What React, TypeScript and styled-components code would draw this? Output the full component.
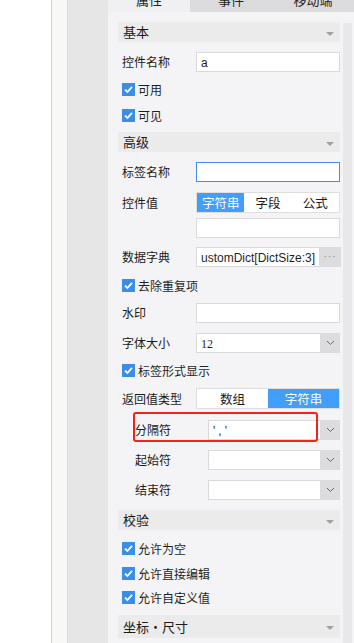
import React from "react";
import styled, { createGlobalStyle } from "styled-components";

const Global = createGlobalStyle`
  html, body { margin: 0; padding: 0; background: #ffffff; }
  body { font-family: "Noto Sans CJK SC", "Noto Sans", sans-serif; color: #1f1f1f; }
  * { box-sizing: border-box; }
`;

const Page = styled.div`
  display: flex;
  width: 354px;
  height: 643px;
  overflow: hidden;
`;

const WhiteArea = styled.div`
  width: 52px;
  background: #ffffff;
  border-right: 1px solid #d7d4c7;
`;

const Strip = styled.div`
  width: 16px;
  background: #f8f8f6;
  border-right: 1px solid #dcdcdc;
`;

const Gutter = styled.div`
  width: 40px;
  background: #e6e6e6;
`;

const Panel = styled.div`
  width: 246px;
  display: flex;
  flex-direction: column;
  background: #f4f4f6;
`;

const Tabs = styled.div`
  display: flex;
  height: 12px;
  overflow: hidden;
`;

const Tab = styled.div<{ $active?: boolean }>`
  width: 82px;
  height: 12px;
  background: ${(p) => (p.$active ? "#f0f0f2" : "#dcdcdf")};
  display: flex;
  justify-content: center;
  font-size: 13px;
  color: #222;
`;

const TabText = styled.span`
  display: block;
  height: 24px;
  line-height: 24px;
  margin-top: -12px;
`;

const Body = styled.div`
  flex: 1;
  display: flex;
`;

const Content = styled.div`
  width: 222px;
  margin-left: 10px;
  margin-right: 3px;
  padding-top: 10px;
  display: flex;
  flex-direction: column;
`;

const Scrollbar = styled.div`
  width: 9px;
  margin-top: 11px;
  background: #e8e8ea;
`;

const Header = styled.div<{ $mt?: number; $h?: number }>`
  margin-top: ${(p) => p.$mt ?? 0}px;
  height: ${(p) => p.$h ?? 20}px;
  background: #ebebeb;
  display: flex;
  align-items: center;
  justify-content: space-between;
  padding: 0 6px 0 5px;
  font-size: 13px;
  line-height: 20px;
  color: #1a1a1a;
`;

const Caret = styled.span`
  width: 0;
  height: 0;
  border-left: 4px solid transparent;
  border-right: 4px solid transparent;
  border-top: 4px solid #a0a0a0;
  margin-top: 3px;
`;

const Row = styled.div<{ $mt: number; $h?: number; $indent?: number }>`
  position: relative;
  margin-top: ${(p) => p.$mt}px;
  height: ${(p) => p.$h ?? 20}px;
  display: flex;
  align-items: center;
  padding-left: ${(p) => p.$indent ?? 4}px;
  font-size: 12px;
`;

const Label = styled.span<{ $w: number }>`
  width: ${(p) => p.$w}px;
  flex: none;
  line-height: 20px;
  color: #1a1a1a;
`;

const Input = styled.div<{ $focus?: boolean }>`
  flex: 1;
  height: 20px;
  background: #ffffff;
  border: 1px solid ${(p) => (p.$focus ? "#3d8ef0" : "#d9d9d9")};
  padding: 0 4px;
  font-size: 12px;
  line-height: 18px;
  overflow: hidden;
  white-space: nowrap;
`;

const LatinText = styled.span<{ $spacing?: number }>`
  font-family: "Liberation Sans", Arial, sans-serif;
  font-size: 12px;
  letter-spacing: ${(p) => p.$spacing ?? 0}px;
`;

const SerifText = styled.span`
  font-family: "Liberation Serif", serif;
  font-size: 12px;
`;

const Field = styled.div`
  flex: 1;
  display: flex;
  height: 20px;
`;

const FieldBox = styled.div`
  flex: 1;
  height: 20px;
  background: #ffffff;
  border: 1px solid #d9d9d9;
  border-right: none;
  padding: 0 4px;
  line-height: 18px;
  overflow: hidden;
  white-space: nowrap;
`;

const SideButton = styled.div`
  width: 20px;
  height: 20px;
  background: #dcdcde;
  display: flex;
  align-items: center;
  justify-content: center;
  color: #777;
  flex: none;
`;

const DotsButton = styled(SideButton)`
  width: 22px;
  font-family: "Liberation Sans", sans-serif;
  font-size: 10px;
  letter-spacing: 1px;
  color: #888;
  padding-bottom: 2px;
`;

const Segmented = styled.div`
  flex: 1;
  display: flex;
  height: 21px;
  background: #ffffff;
  border: 1px solid #dedede;
`;

const Segment = styled.div<{ $active?: boolean }>`
  flex: 1;
  display: flex;
  align-items: center;
  justify-content: center;
  font-size: 12.5px;
  background: ${(p) => (p.$active ? "#419efa" : "#ffffff")};
  color: ${(p) => (p.$active ? "#ffffff" : "#1a1a1a")};
`;

const Check = styled.span`
  width: 13px;
  height: 13px;
  background: #3a8ee8;
  display: inline-flex;
  align-items: center;
  justify-content: center;
  margin-right: 3px;
  flex: none;
`;

const Highlight = styled.div`
  position: absolute;
  left: 15px;
  top: -8px;
  width: 185px;
  height: 30px;
  border: 2px solid #f5221b;
  border-radius: 3px;
  pointer-events: none;
`;

const Chevron = () => (
  <svg width="9" height="6" viewBox="0 0 9 6">
    <path d="M1 1 L4.5 4.5 L8 1" fill="none" stroke="#6a6a6a" strokeWidth="1" />
  </svg>
);

const Checkbox = ({ label, mt }: { label: string; mt: number }) => (
  <Row $mt={mt}>
    <Check>
      <svg width="11" height="11" viewBox="0 0 11 11">
        <path d="M2 5.6 L4.4 8 L9 2.8" fill="none" stroke="#ffffff" strokeWidth="1.8" />
      </svg>
    </Check>
    <span>{label}</span>
  </Row>
);

const Select = ({ children }: { children?: React.ReactNode }) => (
  <Field>
    <FieldBox>{children}</FieldBox>
    <SideButton>
      <Chevron />
    </SideButton>
  </Field>
);

export default function App() {
  return (
    <>
      <Global />
      <Page>
        <WhiteArea />
        <Strip />
        <Gutter />
        <Panel>
          <Tabs>
            <Tab $active>
              <TabText>属性</TabText>
            </Tab>
            <Tab>
              <TabText>事件</TabText>
            </Tab>
            <Tab>
              <TabText>移动端</TabText>
            </Tab>
          </Tabs>
          <Body>
            <Content>
              <Header>
                基本
                <Caret />
              </Header>
              <Row $mt={10}>
                <Label $w={74}>控件名称</Label>
                <Input>
                  <LatinText>a</LatinText>
                </Input>
              </Row>
              <Checkbox mt={7} label="可用" />
              <Checkbox mt={6} label="可见" />

              <Header $mt={7}>
                高级
                <Caret />
              </Header>
              <Row $mt={10}>
                <Label $w={74}>标签名称</Label>
                <Input $focus />
              </Row>
              <Row $mt={10} $h={21}>
                <Label $w={74}>控件值</Label>
                <Segmented>
                  <Segment $active>字符串</Segment>
                  <Segment>字段</Segment>
                  <Segment>公式</Segment>
                </Segmented>
              </Row>
              <Row $mt={5}>
                <Label $w={74} />
                <Input />
              </Row>
              <Row $mt={9}>
                <Label $w={74}>数据字典</Label>
                <Field>
                  <FieldBox>
                    <LatinText>ustomDict[DictSize:3]</LatinText>
                  </FieldBox>
                  <DotsButton>···</DotsButton>
                </Field>
              </Row>
              <Checkbox mt={8} label="去除重复项" />
              <Row $mt={8}>
                <Label $w={74}>水印</Label>
                <Input />
              </Row>
              <Row $mt={10}>
                <Label $w={74}>字体大小</Label>
                <Select>
                  <SerifText>12</SerifText>
                </Select>
              </Row>
              <Checkbox mt={7} label="标签形式显示" />
              <Row $mt={8} $h={21}>
                <Label $w={74}>返回值类型</Label>
                <Segmented>
                  <Segment>数组</Segment>
                  <Segment $active>字符串</Segment>
                </Segmented>
              </Row>
              <Row $mt={11} $indent={17}>
                <Label $w={73}>分隔符</Label>
                <Select>
                  <LatinText $spacing={3}>','</LatinText>
                </Select>
                <Highlight />
              </Row>
              <Row $mt={10} $indent={17}>
                <Label $w={73}>起始符</Label>
                <Select />
              </Row>
              <Row $mt={10} $indent={17}>
                <Label $w={73}>结束符</Label>
                <Select />
              </Row>

              <Header $mt={10}>
                校验
                <Caret />
              </Header>
              <Checkbox mt={8} label="允许为空" />
              <Checkbox mt={5} label="允许直接编辑" />
              <Checkbox mt={4} label="允许自定义值" />

              <Header $mt={8} $h={23}>
                坐标・尺寸
                <Caret />
              </Header>
            </Content>
            <Scrollbar />
          </Body>
        </Panel>
      </Page>
    </>
  );
}
